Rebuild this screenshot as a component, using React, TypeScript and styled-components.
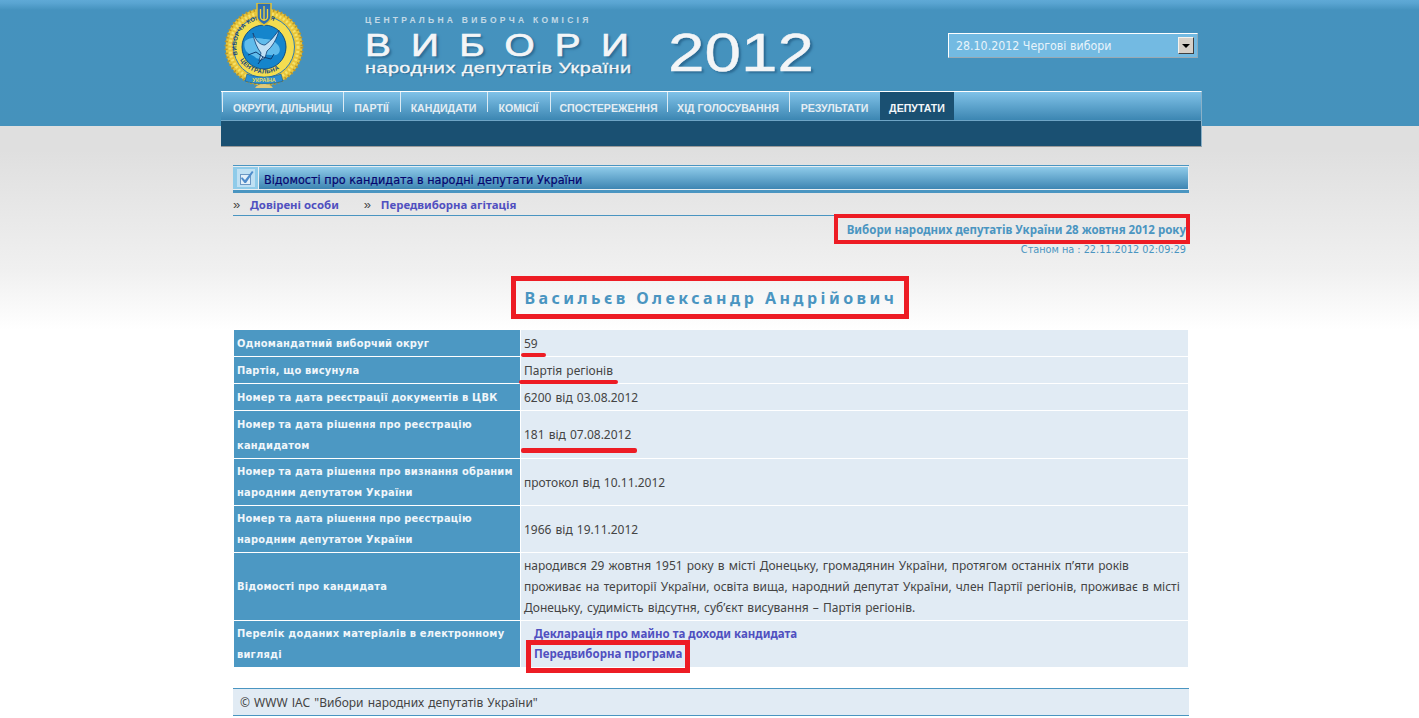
import React from "react";
import styled, { createGlobalStyle } from "styled-components";

const Global = createGlobalStyle`
  html, body { margin: 0; padding: 0; background: #fff; }
  body { font-family: "Noto Sans", sans-serif; color: #444; overflow: hidden; }
`;

const Page = styled.div`
  position: relative;
  height: 718px;
  overflow: hidden;
  background: linear-gradient(#dfdfdf 150px, #f0f0f0 270px, #ffffff 330px);
`;

const HeaderBand = styled.div`
  height: 126px;
  margin-bottom: -126px;
  background: linear-gradient(#5fa9d6 0, #5aa5d2 3px, #4592be 10px, #4592bc 100%);
`;

const Wrapper = styled.div`
  position: relative;
  width: 981px;
  margin-left: 221px;
`;

const Top = styled.header`
  display: flex;
  height: 91px;
`;

const LogoBox = styled.div`
  width: 139px;
  padding-left: 2px;
  box-sizing: border-box;
  svg { display: block; margin-top: 3px; }
`;

const Brand = styled.div`
  width: 585px;
  padding-left: 5px;
  box-sizing: border-box;
  display: flex;
`;

const BrandLeft = styled.div`
  width: 303px;
  color: #f3f5f7;
  font-family: "Liberation Sans", Arial, sans-serif;
`;

const Overline = styled.div`
  font-size: 8.5px;
  font-weight: 700;
  letter-spacing: 3.25px;
  margin-top: 15px;
  height: 17px;
  line-height: 10px;
  white-space: nowrap;
  opacity: 0.72;
`;

const BigWord = styled.div`
  font-size: 31px;
  line-height: 28px;
  height: 26px;
  letter-spacing: 16.2px;
  white-space: nowrap;
  transform: scaleX(1.25);
  transform-origin: left center;
  -webkit-text-stroke: 0.7px #f3f5f7;
  text-shadow: 2px 2px 2px #2c6b94;
`;

const SubWord = styled.div`
  font-size: 14px;
  line-height: 15px;
  margin-top: 3px;
  white-space: nowrap;
  transform: scaleX(1.42);
  transform-origin: left center;
  letter-spacing: 0.3px;
  -webkit-text-stroke: 0.3px #f3f5f7;
  text-shadow: 1px 1px 1px #2c6b94;
`;

const Year = styled.div`
  font-family: "Liberation Sans", Arial, sans-serif;
  font-size: 54px;
  line-height: 54px;
  margin-top: 25px;
  color: #f3f5f7;
  transform: scaleX(1.215);
  transform-origin: left center;
  text-shadow: 2px 2px 2px #2c6b94;
  -webkit-text-stroke: 0.4px #f3f5f7;
`;

const SelectBox = styled.div`
  width: 250px;
  height: 25px;
  margin: 33px 0 0 3px;
  box-sizing: border-box;
  display: flex;
  align-items: center;
  justify-content: space-between;
  background: #73bae2;
  border-top: 1px solid #fff;
  border-left: 1px solid #fff;
  border-bottom: 1px solid #9aa9b3;
  border-right: 1px solid #8aa9bb;
  padding: 0 3px 0 7px;
  color: #e8f4fb;
  font-family: "DejaVu Sans Condensed", "Noto Sans", sans-serif;
  font-size: 12.3px;
`;

const SelectArrow = styled.div`
  width: 16px;
  height: 17px;
  background: #d6d0c8;
  border-top: 1px solid #f4f2ee;
  border-left: 1px solid #f4f2ee;
  border-right: 1px solid #404040;
  border-bottom: 1px solid #404040;
  box-sizing: border-box;
  display: flex;
  align-items: center;
  justify-content: center;
  &::after {
    content: "";
    border-top: 4px solid #000;
    border-left: 4px solid transparent;
    border-right: 4px solid transparent;
  }
`;

const Menu = styled.nav`
  display: flex;
  height: 30px;
  box-sizing: border-box;
  padding-left: 1px;
  border-top: 1px solid #fff;
  border-right: 1px solid #8ab1c8;
  border-bottom: 1px solid #6fa5c6;
  background: linear-gradient(#80c2e8, #3c86b2);
`;

const MenuItem = styled.a<{ $active?: boolean; $w: number }>`
  box-sizing: border-box;
  width: ${(p) => p.$w}px;
  padding: 9px 0 0;
  text-align: center;
  font-family: "Liberation Sans", Arial, sans-serif;
  font-size: 10.6px;
  font-weight: 700;
  line-height: 14px;
  white-space: nowrap;
  color: ${(p) => (p.$active ? "#f2f6f9" : "#e4edf3")};
  background: ${(p) =>
    p.$active
      ? "#1a5072"
      : "linear-gradient(#dcebf4, #dcebf4) no-repeat left top / 1px 20px"};
`;

const SubMenu = styled.div`
  height: 25px;
  background: #1a5072;
  border-right: 1px solid #8ab1c8;
  border-bottom: 1px solid #9a9a9a;
`;

const Content = styled.main`
  margin: 18px 13px 0 12px;
  width: 956px;
`;

const TitleBar = styled.div`
  height: 28px;
  box-sizing: border-box;
  display: flex;
  align-items: stretch;
  border-top: 1px solid #4a95c1;
  border-bottom: 3px solid #4a95c1;
  padding: 1px 0;
  background: #e8eef2;
`;

const TitleIcon = styled.div`
  width: 25px;
  background: #8fcbe9;
  display: flex;
  align-items: center;
  justify-content: center;
  margin-right: 1px;
`;

const TitleText = styled.div`
  flex: 1;
  margin-right: 1px;
  display: flex;
  align-items: center;
  padding: 2px 0 0 5px;
  box-sizing: border-box;
  background: linear-gradient(#8fcbe9, #3d85b2);
  color: #05056e;
  font-family: "DejaVu Sans Condensed", sans-serif;
  font-size: 12.5px;
  -webkit-text-stroke: 0.2px #05056e;
`;

const Tabs = styled.div`
  height: 23px;
  box-sizing: border-box;
  display: flex;
  align-items: center;
  border-bottom: 1px solid #4a95c1;
`;

const TabMark = styled.span`
  color: #444;
  width: 17px;
  font-family: "Liberation Sans", sans-serif;
  font-size: 13px;
`;

const TabLink = styled.a<{ $gap?: number }>`
  color: #5050c0;
  font-family: "Noto Sans", sans-serif;
  font-size: 11.4px;
  font-weight: 700;
  margin-right: ${(p) => p.$gap ?? 0}px;
`;

const ElectionLine = styled.div`
  margin-top: 6px;
  height: 16px;
  line-height: 15px;
  padding-right: 3px;
  text-align: right;
  color: #4a95c1;
  font-family: "Noto Sans", sans-serif;
  font-size: 11.5px;
  font-weight: 700;
`;

const StatusLine = styled.div`
  margin-top: 5px;
  height: 14px;
  line-height: 14px;
  padding-right: 3px;
  text-align: right;
  color: #4a95c1;
  font-family: "DejaVu Sans Condensed", sans-serif;
  font-size: 10.8px;
`;

const Name = styled.h1`
  margin: 26px 0 0;
  height: 46px;
  text-align: center;
  color: #4a95c1;
  font-family: "Noto Sans", sans-serif;
  font-size: 16px;
  line-height: 30px;
  font-weight: 700;
  letter-spacing: 3.45px;
`;

const Table = styled.table`
  width: 956px;
  border-collapse: separate;
  border-spacing: 1px;
  margin: 0;
  table-layout: fixed;
`;

const Row = styled.tr<{ $h: number }>`
  height: ${(p) => p.$h}px;
`;

const Label = styled.th`
  width: 286px;
  box-sizing: border-box;
  background: #4c98c3;
  color: #f0f6fa;
  padding: 0 3px;
  text-align: left;
  font-family: "DejaVu Sans Condensed", sans-serif;
  font-size: 11px;
  line-height: 21px;
  font-weight: 700;
  letter-spacing: 0.2px;
`;

const Value = styled.td`
  background: #e1ebf4;
  color: #444;
  padding: 0 3px;
  font-family: "Noto Sans", sans-serif;
  font-size: 12px;
  line-height: 21px;
  word-spacing: 1px;
`;

const DocLink = styled.a`
  display: block;
  color: #5050c0;
  font-family: "Noto Sans", sans-serif;
  font-weight: 700;
  font-size: 11.5px;
  line-height: 20px;
  word-spacing: 0;
  padding-left: 10px;
`;

const Footer = styled.footer`
  margin-top: 20px;
  height: 28px;
  box-sizing: border-box;
  border-top: 1px solid #4a95c1;
  border-bottom: 1px solid #4a95c1;
  background: #e1ebf4;
  padding-left: 7px;
  color: #444;
  font-family: "Noto Sans", sans-serif;
  font-size: 12px;
  line-height: 28px;
  word-spacing: 1px;
`;

const Mark = styled.div<{ $x: number; $y: number; $w: number; $h: number; $b?: number; $line?: boolean }>`
  position: absolute;
  left: ${(p) => p.$x}px;
  top: ${(p) => p.$y}px;
  width: ${(p) => p.$w}px;
  height: ${(p) => p.$h}px;
  box-sizing: border-box;
  ${(p) => (p.$line ? "background: #ed1c24; border-radius: 2px;" : `border: ${p.$b ?? 4}px solid #ed1c24;`)}
`;

const Logo = () => (
  <svg width="82" height="86" viewBox="0 0 82 86">
    <defs>
      <path id="ringTop" d="M14.5 52a27.5 27.5 0 0 1 53 -16" />
      <path id="ringBottom" d="M17 57a28 28 0 0 0 48 0" />
    </defs>
    <circle cx="41" cy="44" r="38.5" fill="#e8c53a" />
    <circle cx="41" cy="44" r="38" fill="none" stroke="#b8962a" strokeWidth="3" strokeDasharray="1.5 2.5" />
    <circle cx="41" cy="44" r="34" fill="none" stroke="#f5e16a" strokeWidth="3" strokeDasharray="2 2" />
    <circle cx="41" cy="44" r="30.5" fill="#f4dd50" stroke="#2b7ab5" strokeWidth="1" />
    <circle cx="41" cy="44" r="22" fill="#1585cc" stroke="#0d4e85" strokeWidth="1" />
    <path d="M22 38c6-5 14-3 19-2 5 0 10 1 13 5 3 3 4 7 1 10-5 3-8 0-12 1-4 2-6 5-10 3-2-3-7-3-10-7-2-4-2-7-1-10z" fill="#60bcec" />
    <path d="M30 30C33 38 37 42 42 42 48 38 52 32 56 27 54 36 49 44 44 48L42 55 36 58 38 50C34 45 31 38 30 30z" fill="#bfe0f5" stroke="#123f74" strokeWidth="0.8" />
    <path d="M25 52l8-3 7 5-5 7M40 54l8 2 3-5" fill="none" stroke="#0b3c72" strokeWidth="1" />
    <text fontFamily="Liberation Sans" fontSize="6" fontWeight="700" fill="#14457a" letterSpacing="0.3">
      <textPath href="#ringTop">ВИБОРЧА КОМІСІЯ</textPath>
    </text>
    <text fontFamily="Liberation Sans" fontSize="6" fontWeight="700" fill="#14457a" letterSpacing="0.4">
      <textPath href="#ringBottom">ЦЕНТРАЛЬНА</textPath>
    </text>
    <path d="M34 0h14v14c0 4-4 6-7 8-3-2-7-4-7-8z" fill="#2f70b2" stroke="#e3c233" strokeWidth="1.5" />
    <path d="M41 3v15M37.5 6v8c0 2 2 3 3.5 3s3.5-1 3.5-3V6" fill="none" stroke="#f1d23c" strokeWidth="1.3" />
    <path d="M24 71c5 2 11 3 17 3s12-1 17-3l2 7c-6 2-12 3-19 3s-13-1-19-3z" fill="#2b8fd2" stroke="#0c4f86" strokeWidth="0.5" />
    <text x="41" y="79" textAnchor="middle" fontFamily="Liberation Sans" fontSize="5.5" fontWeight="700" fill="#f4dd50">УКРАЇНА</text>
    <path d="M32 85c2-3 5-4 9-4s7 1 9 4z" fill="#dfc97a" />
  </svg>
);

const CheckIcon = () => (
  <svg width="18" height="18" viewBox="0 0 18 18">
    <rect width="18" height="18" fill="#bfe0f3" />
    <rect x="3.5" y="5.5" width="10" height="10" fill="#e3f0f9" stroke="#6c98c4" />
    <path d="M5 8l3 3 7-9 1.5 1L9 14H7.5L4 9.5z" fill="#4f8ccb" />
  </svg>
);

const menu: [string, number][] = [
  ["ОКРУГИ, ДІЛЬНИЦІ", 121],
  ["ПАРТІЇ", 57],
  ["КАНДИДАТИ", 87],
  ["КОМІСІЇ", 63],
  ["СПОСТЕРЕЖЕННЯ", 117],
  ["ХІД ГОЛОСУВАННЯ", 122],
  ["РЕЗУЛЬТАТИ", 91],
];

export default function App() {
  return (
    <Page>
      <Global />
      <HeaderBand />
      <Wrapper>
        <Top>
          <LogoBox><Logo /></LogoBox>
          <Brand>
            <BrandLeft>
              <Overline>ЦЕНТРАЛЬНА ВИБОРЧА КОМІСІЯ</Overline>
              <BigWord>ВИБОРИ</BigWord>
              <SubWord>народних депутатів України</SubWord>
            </BrandLeft>
            <Year>2012</Year>
          </Brand>
          <SelectBox>
            <span>28.10.2012 Чергові вибори</span>
            <SelectArrow />
          </SelectBox>
        </Top>
        <Menu>
          {menu.map(([m, w]) => (
            <MenuItem key={m} $w={w}>{m}</MenuItem>
          ))}
          <MenuItem $active $w={74}>ДЕПУТАТИ</MenuItem>
        </Menu>
        <SubMenu />
        <Content>
          <TitleBar>
            <TitleIcon><CheckIcon /></TitleIcon>
            <TitleText>Відомості про кандидата в народні депутати України</TitleText>
          </TitleBar>
          <Tabs>
            <TabMark>»</TabMark>
            <TabLink $gap={25}>Довірені особи</TabLink>
            <TabMark>»</TabMark>
            <TabLink>Передвиборна агітація</TabLink>
          </Tabs>
          <ElectionLine>Вибори народних депутатів України 28 жовтня 2012 року</ElectionLine>
          <StatusLine>Станом на : 22.11.2012 02:09:29</StatusLine>
          <Name>Васильєв Олександр Андрійович</Name>
          <Table>
            <tbody>
              <Row $h={26}><Label>Одномандатний виборчий округ</Label><Value>59</Value></Row>
              <Row $h={26}><Label>Партія, що висунула</Label><Value>Партія регіонів</Value></Row>
              <Row $h={26}><Label>Номер та дата реєстрації документів в ЦВК</Label><Value>6200 від 03.08.2012</Value></Row>
              <Row $h={47}><Label>Номер та дата рішення про реєстрацію кандидатом</Label><Value>181 від 07.08.2012</Value></Row>
              <Row $h={46}><Label>Номер та дата рішення про визнання обраним народним депутатом України</Label><Value>протокол від 10.11.2012</Value></Row>
              <Row $h={46}><Label>Номер та дата рішення про реєстрацію народним депутатом України</Label><Value>1966 від 19.11.2012</Value></Row>
              <Row $h={67}><Label>Відомості про кандидата</Label><Value>народився 29 жовтня 1951 року в місті Донецьку, громадянин України, протягом останніх п’яти років проживає на території України, освіта вища, народний депутат України, член Партії регіонів, проживає в місті Донецьку, судимість відсутня, суб’єкт висування – Партія регіонів.</Value></Row>
              <Row $h={46}><Label>Перелік доданих матеріалів в електронному вигляді</Label><Value><DocLink>Декларація про майно та доходи кандидата</DocLink><DocLink>Передвиборна програма</DocLink></Value></Row>
            </tbody>
          </Table>
          <Footer>© WWW ІАС "Вибори народних депутатів України"</Footer>
        </Content>
      </Wrapper>
      <Mark $x={834} $y={214} $w={356} $h={30} />
      <Mark $x={511} $y={276} $w={398} $h={43} $b={5} />
      <Mark $x={521} $y={353} $w={25} $h={4} $line />
      <Mark $x={519} $y={380} $w={99} $h={4} $line />
      <Mark $x={521} $y={448} $w={116} $h={5} $line />
      <Mark $x={526} $y={640} $w={164} $h={33} $b={5} />
    </Page>
  );
}
